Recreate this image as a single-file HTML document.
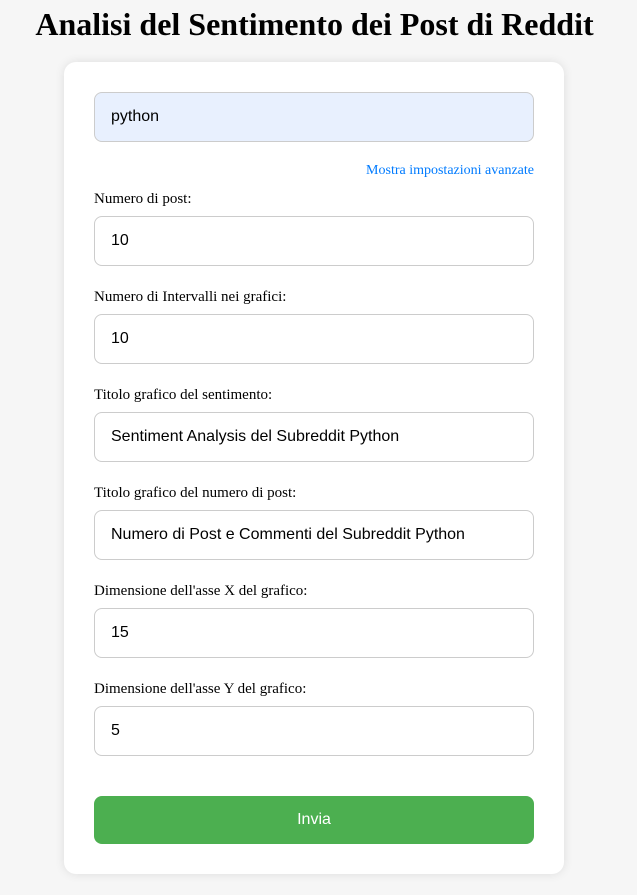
<!DOCTYPE html>
<html><head><style>
*{box-sizing:border-box}
body{margin:0;background:#f6f6f6;font-family:"Liberation Serif",serif;width:637px;height:895px;overflow:hidden}
h1{margin:0;position:absolute;top:5px;left:-4px;width:637px;text-align:center;font-size:32px;font-weight:bold;line-height:38px}
.card{position:absolute;left:64px;top:62px;width:500px;height:812px;background:#fff;border-radius:12px;box-shadow:0 0 10px rgba(0,0,0,0.1)}
.in{position:absolute;left:30px;width:440px;height:50px;border:1px solid #ccc;border-radius:8px;padding-left:16px;font:16px "Liberation Sans",sans-serif;line-height:48px;color:#000}
.lb{position:absolute;left:30px;font-size:15px;line-height:18px}
.link{position:absolute;right:30px;top:101px;font-size:14px;color:#007bff}
.btn{position:absolute;left:30px;top:734px;width:440px;height:48px;background:#4caf50;border-radius:8px;color:#fff;font:16px "Liberation Sans",sans-serif;text-align:center;line-height:48px}
</style></head><body>
<h1>Analisi del Sentimento dei Post di Reddit</h1>
<div class="card">
<div class="in" style="top:30px;background:#e8f0fe">python</div>
<div class="link">Mostra impostazioni avanzate</div>
<div class="lb" style="top:128px">Numero di post:</div>
<div class="in" style="top:154px">10</div>
<div class="lb" style="top:226px">Numero di Intervalli nei grafici:</div>
<div class="in" style="top:252px">10</div>
<div class="lb" style="top:324px">Titolo grafico del sentimento:</div>
<div class="in" style="top:350px">Sentiment Analysis del Subreddit Python</div>
<div class="lb" style="top:422px">Titolo grafico del numero di post:</div>
<div class="in" style="top:448px">Numero di Post e Commenti del Subreddit Python</div>
<div class="lb" style="top:520px">Dimensione dell'asse X del grafico:</div>
<div class="in" style="top:546px">15</div>
<div class="lb" style="top:618px">Dimensione dell'asse Y del grafico:</div>
<div class="in" style="top:644px">5</div>
<div class="btn">Invia</div>
</div>
</body></html>
